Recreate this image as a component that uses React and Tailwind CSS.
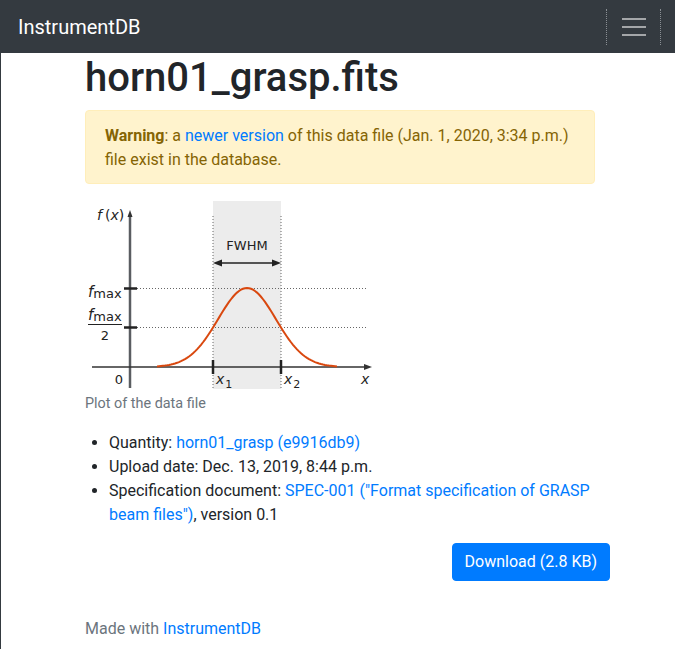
import React from "react";

function Chart() {
  const pts = [];
  const sigma = 34 / 1.1774;
  for (let x = 157; x <= 337; x += 2) {
    const y = 367 - 79 * Math.exp(-((x - 247) ** 2) / (2 * sigma * sigma));
    pts.push(`${x},${y.toFixed(2)}`);
  }
  const d = "M" + pts.join(" L");
  const font = "'DejaVu Sans', sans-serif";
  return (
    <svg width="300" height="193" viewBox="85 200 300 193" className="block">
      <rect x="213" y="201" width="68" height="188" fill="#ececec" />
      <line x1="213" y1="216" x2="213" y2="389" stroke="#666" strokeWidth="1" strokeDasharray="1 2" />
      <line x1="281" y1="216" x2="281" y2="389" stroke="#666" strokeWidth="1" strokeDasharray="1 2" />
      <line x1="137" y1="288.5" x2="366" y2="288.5" stroke="#666" strokeWidth="1" strokeDasharray="1 2" />
      <line x1="137" y1="327.5" x2="366" y2="327.5" stroke="#666" strokeWidth="1" strokeDasharray="1 2" />
      <line x1="130" y1="388" x2="130" y2="215" stroke="#5a5d61" strokeWidth="2.5" />
      <path d="M130,210 L127.5,217 L132.5,217 Z" fill="#333" />
      <line x1="92" y1="367" x2="366" y2="367" stroke="#333" strokeWidth="1.3" />
      <path d="M372,367 L364,364 L364,370 Z" fill="#333" />
      <line x1="124" y1="288.5" x2="137" y2="288.5" stroke="#222" strokeWidth="2.5" />
      <line x1="124" y1="327.5" x2="137" y2="327.5" stroke="#222" strokeWidth="2.5" />
      <line x1="213" y1="360" x2="213" y2="374" stroke="#222" strokeWidth="2.5" />
      <line x1="281" y1="360" x2="281" y2="374" stroke="#222" strokeWidth="2.5" />
      <line x1="218" y1="263" x2="276" y2="263" stroke="#222" strokeWidth="1.5" />
      <path d="M213,263 L222,259.5 L222,266.5 Z" fill="#222" />
      <path d="M281,263 L272,259.5 L272,266.5 Z" fill="#222" />
      <text x="247" y="250" textAnchor="middle" fontFamily={font} fontSize="13" fill="#222">FWHM</text>
      <path d={d} fill="none" stroke="#d9480f" strokeWidth="2" />
      <text x="97" y="220" fontFamily={font} fontSize="14" fill="#222">
        <tspan fontStyle="italic">f</tspan>
        <tspan dx="3">(</tspan>
        <tspan fontStyle="italic">x</tspan>
        <tspan>)</tspan>
      </text>
      <text x="88" y="297" fontFamily={font} fontSize="15" fill="#222">
        <tspan fontStyle="italic">f</tspan>
        <tspan fontSize="13" dy="1">max</tspan>
      </text>
      <text x="88" y="320" fontFamily={font} fontSize="15" fill="#222">
        <tspan fontStyle="italic">f</tspan>
        <tspan fontSize="13" dy="1">max</tspan>
      </text>
      <line x1="88" y1="324.5" x2="122" y2="324.5" stroke="#222" strokeWidth="1" />
      <text x="105" y="340" textAnchor="middle" fontFamily={font} fontSize="13" fill="#222">2</text>
      <text x="119" y="384" textAnchor="middle" fontFamily={font} fontSize="13" fill="#222">0</text>
      <text x="216" y="384" fontFamily={font} fontSize="14" fill="#222">
        <tspan fontStyle="italic">x</tspan>
        <tspan fontSize="11" dy="4" dx="1">1</tspan>
      </text>
      <text x="284" y="384" fontFamily={font} fontSize="14" fill="#222">
        <tspan fontStyle="italic">x</tspan>
        <tspan fontSize="11" dy="4" dx="1">2</tspan>
      </text>
      <text x="361" y="384" fontFamily={font} fontSize="14" fontStyle="italic" fill="#222">x</text>
    </svg>
  );
}

export default function App() {
  return (
    <div className="min-h-[649px] bg-white font-['Roboto',sans-serif] text-[#212529] text-[16px] leading-[1.5]">
      <nav className="h-[53px] bg-[#343a40] flex items-center justify-between pl-[18px] pr-[14px]">
        <span className="text-[20px] text-white leading-[30px]">InstrumentDB</span>
        <button className="w-[55px] h-[36px] mt-px border-x border-dotted border-[#8a8f94] flex flex-col items-center justify-center gap-[5.5px]">
          <span className="block w-[24px] h-[2.5px] bg-[#a4a6a9]" />
          <span className="block w-[24px] h-[2.5px] bg-[#a4a6a9]" />
          <span className="block w-[24px] h-[2.5px] bg-[#a4a6a9]" />
        </button>
      </nav>
      <div className="border-l border-[#343a40] min-h-[596px]">
        <main className="ml-[84px] w-[510px] pt-px">
          <h1 className="text-[40px] font-medium leading-[48px] mb-2">horn01_grasp.fits</h1>
          <div className="bg-[#fff3cd] border border-[#ffeeba] text-[#856404] rounded pl-[19px] pr-5 pt-[13px] pb-[11px] mb-4">
            <strong className="font-bold">Warning</strong>: a{" "}
            <a className="text-[#007bff]">newer version</a> of this data file (Jan. 1, 2020, 3:34 p.m.) file exist in the database.
          </div>
          <figure className="mb-4">
            <Chart />
            <figcaption className="text-[14.4px] leading-[1.5] text-[#6c757d]">Plot of the data file</figcaption>
          </figure>
          <ul className="list-disc pl-6 mb-4">
            <li>
              Quantity: <a className="text-[#007bff]">horn01_grasp (e9916db9)</a>
            </li>
            <li>Upload date: Dec. 13, 2019, 8:44 p.m.</li>
            <li>
              Specification document:{" "}
              <a className="text-[#007bff]">SPEC-001 ("Format specification of GRASP beam files")</a>, version 0.1
            </li>
          </ul>
          <div className="flex justify-end mr-[-15px]">
            <button className="bg-[#007bff] text-white rounded px-3 py-[6px] leading-[24px] border border-[#007bff]">
              Download (2.8 KB)
            </button>
          </div>
          <footer className="mt-[36px] text-[#6c757d]">
            Made with <a className="text-[#007bff]">InstrumentDB</a>
          </footer>
        </main>
      </div>
    </div>
  );
}
